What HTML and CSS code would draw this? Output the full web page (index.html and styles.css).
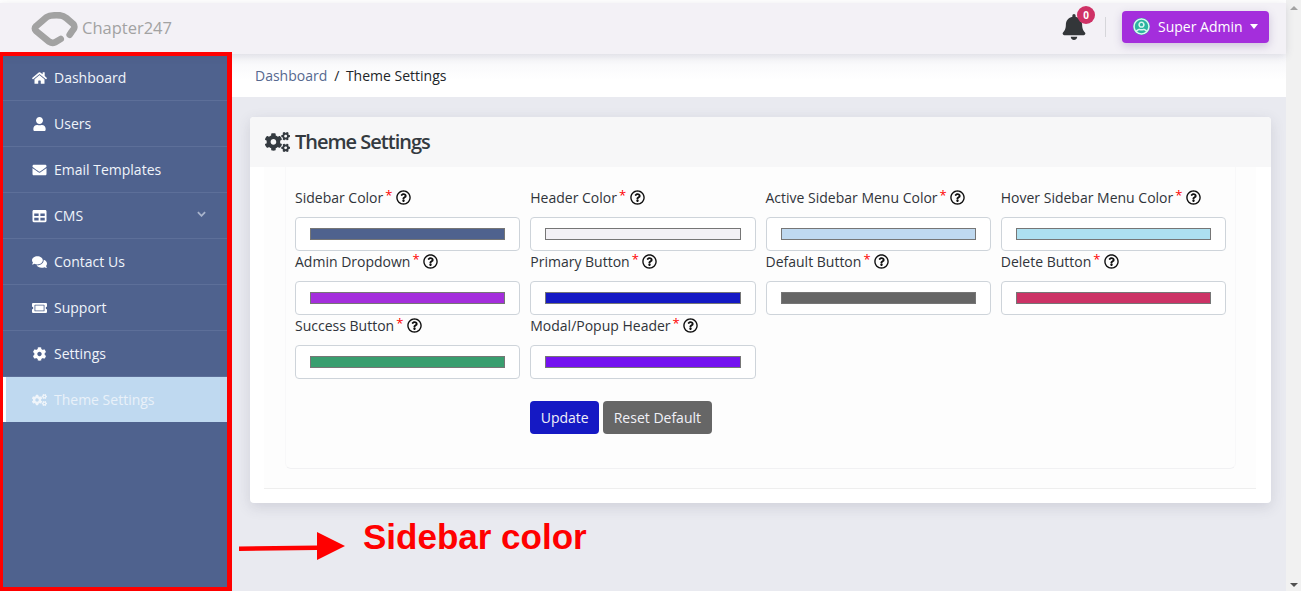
FILE: index.html
```html
<!DOCTYPE html>
<html lang="en">
<head>
<meta charset="utf-8">
<title>Theme Settings</title>
<link rel="stylesheet" href="styles.css">
</head>
<body>
<svg class="defs" aria-hidden="true">
  <symbol id="i-home" viewBox="0 0 576 512"><path d="M280.37 148.26L96 300.11V464a16 16 0 0 0 16 16l112.06-.29a16 16 0 0 0 15.92-16V368a16 16 0 0 1 16-16h64a16 16 0 0 1 16 16v95.64a16 16 0 0 0 16 16.05L464 480a16 16 0 0 0 16-16V300L295.67 148.26a12.19 12.19 0 0 0-15.3 0zM571.6 251.47L488 182.56V44.05a12 12 0 0 0-12-12h-56a12 12 0 0 0-12 12v72.61L318.47 43a48 48 0 0 0-61 0L4.34 251.47a12 12 0 0 0-1.6 16.9l25.5 31A12 12 0 0 0 45.15 301l235.22-193.74a12.19 12.19 0 0 1 15.3 0L530.9 301a12 12 0 0 0 16.9-1.6l25.5-31a12 12 0 0 0-1.7-16.93z"/></symbol>
  <symbol id="i-user" viewBox="0 0 448 512"><path d="M224 256c70.7 0 128-57.3 128-128S294.7 0 224 0 96 57.3 96 128s57.3 128 128 128zm89.6 32h-16.7c-22.2 10.2-46.9 16-72.9 16s-50.6-5.8-72.9-16h-16.7C60.2 288 0 348.2 0 422.4V464c0 26.5 21.5 48 48 48h352c26.5 0 48-21.5 48-48v-41.6c0-74.2-60.2-134.4-134.4-134.4z"/></symbol>
  <symbol id="i-envelope" viewBox="0 0 512 512"><path d="M502.3 190.8c3.9-3.1 9.7-.2 9.7 4.7V400c0 26.5-21.5 48-48 48H48c-26.5 0-48-21.5-48-48V195.6c0-5 5.7-7.8 9.7-4.7 22.4 17.4 52.1 39.5 154.1 113.6 21.1 15.4 56.7 47.8 92.2 47.6 35.7.3 72-32.8 92.3-47.6 102-74.1 131.6-96.3 154-113.7zM256 320c23.2.4 56.6-29.2 73.4-41.4 132.7-96.3 142.8-104.7 173.4-128.7 5.8-4.5 9.2-11.5 9.2-18.9v-19c0-26.5-21.5-48-48-48H48C21.5 64 0 85.5 0 112v19c0 7.4 3.4 14.3 9.2 18.9 30.6 23.9 40.7 32.4 173.4 128.7 16.8 12.2 50.2 41.8 73.4 41.4z"/></symbol>
  <symbol id="i-table" viewBox="0 0 512 512"><path d="M464 32H48C21.49 32 0 53.49 0 80v352c0 26.51 21.49 48 48 48h416c26.51 0 48-21.49 48-48V80c0-26.51-21.49-48-48-48zM224 416H64v-96h160v96zm0-160H64v-96h160v96zm224 160H288v-96h160v96zm0-160H288v-96h160v96z"/></symbol>
  <symbol id="i-comments" viewBox="0 0 576 512"><path d="M416 192c0-88.4-93.1-160-208-160S0 103.6 0 192c0 34.3 14.1 65.9 38 92-13.4 30.2-35.5 54.2-35.8 54.5-2.2 2.3-2.8 5.7-1.5 8.7S4.8 352 8 352c36.6 0 66.9-12.3 88.7-25 32.2 15.7 70.3 25 111.3 25 114.9 0 208-71.6 208-160zm122 220c23.9-26 38-57.7 38-92 0-66.9-53.5-124.2-129.3-148.1.9 6.6 1.3 13.3 1.3 20.1 0 105.9-107.7 192-240 192-10.8 0-21.3-.8-31.7-1.9C207.8 439.6 281.8 480 368 480c41 0 79.1-9.2 111.3-25 21.8 12.7 52.1 25 88.7 25 3.2 0 6.1-1.9 7.3-4.8 1.3-2.9.7-6.3-1.5-8.7-.3-.3-22.4-24.2-35.8-54.5z"/></symbol>
  <symbol id="i-ticket" viewBox="0 0 576 512"><path d="M128 160h320v192H128V160zm400 96c0 26.51 21.49 48 48 48v96c0 26.51-21.49 48-48 48H48c-26.51 0-48-21.49-48-48v-96c26.51 0 48-21.49 48-48s-21.49-48-48-48v-96c0-26.51 21.49-48 48-48h480c26.51 0 48 21.49 48 48v96c-26.51 0-48 21.49-48 48zm-48-104c0-13.255-10.745-24-24-24H120c-13.255 0-24 10.745-24 24v208c0 13.255 10.745 24 24 24h336c13.255 0 24-10.745 24-24V152z"/></symbol>
  <symbol id="i-cog" viewBox="0 0 512 512"><path d="M487.4 315.7l-42.6-24.6c4.3-23.2 4.3-47 0-70.2l42.6-24.6c4.9-2.8 7.1-8.6 5.5-14-11.1-35.6-30-67.8-54.7-94.6-3.8-4.1-10-5.1-14.8-2.3L380.8 110c-17.9-15.4-38.5-27.3-60.8-35.1V25.8c0-5.6-3.9-10.5-9.4-11.7-36.7-8.2-74.3-7.8-109.2 0-5.5 1.2-9.4 6.1-9.4 11.7V75c-22.2 7.9-42.8 19.8-60.8 35.1L88.7 85.5c-4.9-2.8-11-1.9-14.8 2.3-24.7 26.7-43.6 58.9-54.7 94.6-1.7 5.4.6 11.2 5.5 14L67.3 221c-4.3 23.2-4.3 47 0 70.2l-42.6 24.6c-4.9 2.8-7.1 8.6-5.5 14 11.1 35.6 30 67.8 54.7 94.6 3.8 4.1 10 5.1 14.8 2.3l42.6-24.6c17.9 15.4 38.5 27.3 60.8 35.1v49.2c0 5.6 3.9 10.5 9.4 11.7 36.7 8.2 74.3 7.8 109.2 0 5.5-1.2 9.4-6.1 9.4-11.7v-49.2c22.2-7.9 42.8-19.8 60.8-35.1l42.6 24.6c4.9 2.8 11 1.9 14.8-2.3 24.7-26.7 43.6-58.9 54.7-94.6 1.5-5.5-.7-11.3-5.6-14.1zM256 336c-44.1 0-80-35.9-80-80s35.9-80 80-80 80 35.9 80 80-35.9 80-80 80z"/></symbol>
  <symbol id="i-cogs" viewBox="0 0 640 512"><path d="M512.1 191l-8.2 14.3c-3 5.3-9.4 7.5-15.1 5.4-11.8-4.4-22.6-10.7-32.1-18.6-4.6-3.8-5.8-10.5-2.8-15.7l8.2-14.3c-6.9-8-12.3-17.3-15.9-27.4h-16.5c-6 0-11.2-4.3-12.2-10.3-2-12-2.1-24.6 0-37.1 1-6 6.2-10.4 12.2-10.4h16.5c3.6-10.1 9-19.4 15.9-27.4l-8.2-14.3c-3-5.2-1.9-11.9 2.8-15.7 9.5-7.9 20.4-14.2 32.1-18.6 5.7-2.1 12.1.1 15.1 5.4l8.2 14.3c10.5-1.9 21.2-1.9 31.7 0L552 6.3c3-5.3 9.4-7.5 15.1-5.4 11.8 4.4 22.6 10.7 32.1 18.6 4.6 3.8 5.8 10.5 2.8 15.7l-8.2 14.3c6.9 8 12.3 17.3 15.9 27.4h16.5c6 0 11.2 4.3 12.2 10.3 2 12 2.1 24.6 0 37.1-1 6-6.2 10.4-12.2 10.4h-16.5c-3.6 10.1-9 19.4-15.9 27.4l8.2 14.3c3 5.2 1.9 11.9-2.8 15.7-9.5 7.9-20.4 14.2-32.1 18.6-5.7 2.1-12.1-.1-15.1-5.4l-8.2-14.3c-10.4 1.9-21.2 1.9-31.7 0zm-10.5-58.8c38.5 29.6 82.4-14.3 52.8-52.8-38.5-29.7-82.4 14.3-52.8 52.8zM386.3 286.1l33.7 16.8c10.1 5.8 14.5 18.1 10.5 29.1-8.9 24.2-26.4 46.4-42.6 65.8-7.4 8.9-20.2 11.1-30.3 5.3l-29.1-16.8c-16 13.7-34.6 24.6-54.9 31.7v33.6c0 11.6-8.3 21.6-19.7 23.6-24.6 4.2-50.4 4.4-75.9 0-11.5-2-20-11.9-20-23.6V418c-20.3-7.2-38.9-18-54.9-31.7L74 403c-10 5.8-22.9 3.6-30.3-5.3-16.2-19.4-33.3-41.6-42.2-65.7-4-10.9.4-23.2 10.5-29.1l33.3-16.8c-3.9-20.9-3.9-42.4 0-63.4L12 205.8c-10.1-5.8-14.6-18.1-10.5-29 8.9-24.2 26-46.4 42.2-65.8 7.4-8.9 20.2-11.1 30.3-5.3l29.1 16.8c16-13.7 34.6-24.6 54.9-31.7V57.1c0-11.5 8.2-21.5 19.6-23.5 24.6-4.2 50.5-4.4 76-.1 11.5 2 20 11.9 20 23.6v33.6c20.3 7.2 38.9 18 54.9 31.7l29.1-16.8c10-5.8 22.9-3.6 30.3 5.3 16.2 19.4 33.2 41.6 42.1 65.8 4 10.9.1 23.2-10 29.1l-33.7 16.8c3.9 21 3.9 42.5 0 63.5zm-117.6 21.1c59.2-77-28.7-164.9-105.7-105.7-59.2 77 28.7 164.9 105.7 105.7zm243.4 182.7l-8.2 14.3c-3 5.3-9.4 7.5-15.1 5.4-11.8-4.4-22.6-10.7-32.1-18.6-4.6-3.8-5.8-10.5-2.8-15.7l8.2-14.3c-6.9-8-12.3-17.3-15.9-27.4h-16.5c-6 0-11.2-4.3-12.2-10.3-2-12-2.1-24.6 0-37.1 1-6 6.2-10.4 12.2-10.4h16.5c3.6-10.1 9-19.4 15.9-27.4l-8.2-14.3c-3-5.2-1.9-11.9 2.8-15.7 9.5-7.9 20.4-14.2 32.1-18.6 5.7-2.1 12.1.1 15.1 5.4l8.2 14.3c10.5-1.9 21.2-1.9 31.7 0l8.2-14.3c3-5.3 9.4-7.5 15.1-5.4 11.8 4.4 22.6 10.7 32.1 18.6 4.6 3.8 5.8 10.5 2.8 15.7l-8.2 14.3c6.9 8 12.3 17.3 15.9 27.4h16.5c6 0 11.2 4.3 12.2 10.3 2 12 2.1 24.6 0 37.1-1 6-6.2 10.4-12.2 10.4h-16.5c-3.6 10.1-9 19.4-15.9 27.4l8.2 14.3c3 5.2 1.9 11.9-2.8 15.7-9.5 7.9-20.4 14.2-32.1 18.6-5.7 2.1-12.1-.1-15.1-5.4l-8.2-14.3c-10.4 1.9-21.2 1.9-31.7 0zM501.6 431c38.5 29.6 82.4-14.3 52.8-52.8-38.5-29.6-82.4 14.3-52.8 52.8z"/></symbol>
  <symbol id="i-bell" viewBox="0 0 448 512"><path d="M224 512c35.32 0 63.97-28.65 63.97-64H160.03c0 35.35 28.65 64 63.97 64zm215.39-149.71c-19.32-20.76-55.47-51.99-55.47-154.29 0-77.7-54.48-139.9-127.94-155.16V32c0-17.67-14.32-32-31.98-32s-31.98 14.33-31.98 32v20.84C118.56 68.1 64.08 130.3 64.08 208c0 102.3-36.15 133.53-55.47 154.29-6 6.45-8.66 14.16-8.61 21.71.11 16.4 12.98 32 32.1 32h383.8c19.12 0 32-15.6 32.1-32 .05-7.55-2.61-15.27-8.61-21.71z"/></symbol>
  <symbol id="i-help" viewBox="0 0 512 512"><path d="M256 8C119.043 8 8 119.083 8 256c0 136.997 111.043 248 248 248s248-111.003 248-248C504 119.083 392.957 8 256 8zm0 448c-110.532 0-200-89.431-200-200 0-110.495 89.472-200 200-200 110.491 0 200 89.471 200 200 0 110.53-89.431 200-200 200zm107.244-255.2c0 67.052-72.421 68.084-72.421 92.863V300c0 6.627-5.373 12-12 12h-45.647c-6.627 0-12-5.373-12-12v-8.659c0-35.745 27.1-50.034 47.579-61.516 17.561-9.845 28.324-16.541 28.324-29.579 0-17.246-21.999-28.693-39.784-28.693-23.189 0-33.894 10.977-48.942 29.969-4.057 5.12-11.46 6.071-16.666 2.124l-27.824-21.098c-5.107-3.872-6.251-11.066-2.644-16.363C184.846 131.491 214.94 112 261.794 112c49.071 0 101.45 38.304 101.45 88.8zM298 368c0 23.159-18.841 42-42 42s-42-18.841-42-42 18.841-42 42-42 42 18.841 42 42z"/></symbol>
  <symbol id="i-usercircle" viewBox="0 0 496 512"><path d="M248 104c-53 0-96 43-96 96s43 96 96 96 96-43 96-96-43-96-96-96zm0 144c-26.5 0-48-21.5-48-48s21.5-48 48-48 48 21.5 48 48-21.5 48-48 48zm0-240C111 8 0 119 0 256s111 248 248 248 248-111 248-248S385 8 248 8zm0 448c-49.7 0-95.1-18.3-130.1-48.4 14.9-23 40.4-38.6 69.6-39.5 20.8 6.4 40.6 9.6 60.5 9.6s39.7-3.1 60.5-9.6c29.2 1 54.7 16.5 69.6 39.5-35 30.1-80.4 48.4-130.1 48.4zm162.7-84.1c-24.4-31.4-62.1-51.9-105.1-51.9-10.2 0-26 9.6-57.6 9.6-31.5 0-47.4-9.6-57.6-9.6-42.9 0-80.6 20.5-105.1 51.9C61.9 339.2 48 299.2 48 256c0-110.3 89.7-200 200-200s200 89.7 200 200c0 43.2-13.9 83.2-37.3 115.9z"/></symbol>
</svg>

<div class="window">
  <div class="page">
    <header class="topbar">
      <a class="brand" href="#">
        <svg class="brand-mark" viewBox="0 0 50 38"><path d="M31 28.500 L25 32 Q22 33.500 19 31.500 L5 20 Q2.500 17.500 5 15 L16 5.500 Q20 3 30 3.500 Q34 4 37 6.500 L44.500 13 Q46 15 45 17.500 L42.500 21 L40.500 24"/></svg>
        <span class="brand-name">Chapter247</span>
      </a>
      <div class="top-actions">
        <div class="bell">
          <svg class="bell-icon"><use href="#i-bell"/></svg>
          <span class="badge">0</span>
        </div>
        <span class="top-divider"></span>
        <button class="admin" type="button">
          <svg class="admin-icon"><use href="#i-usercircle"/></svg>
          <span class="admin-name">Super Admin</span>
          <span class="caret"></span>
        </button>
      </div>
    </header>

    <div class="shell">
      <nav class="sidebar">
        <a class="nav-item" href="#"><svg class="nav-icon"><use href="#i-home"/></svg>Dashboard</a>
        <a class="nav-item" href="#"><svg class="nav-icon"><use href="#i-user"/></svg>Users</a>
        <a class="nav-item" href="#"><svg class="nav-icon"><use href="#i-envelope"/></svg>Email Templates</a>
        <a class="nav-item" href="#"><svg class="nav-icon"><use href="#i-table"/></svg>CMS<svg class="chevron" viewBox="0 0 10 6"><path d="M1 1l4 4 4-4"/></svg></a>
        <a class="nav-item" href="#"><svg class="nav-icon"><use href="#i-comments"/></svg>Contact Us</a>
        <a class="nav-item" href="#"><svg class="nav-icon"><use href="#i-ticket"/></svg>Support</a>
        <a class="nav-item" href="#"><svg class="nav-icon"><use href="#i-cog"/></svg>Settings</a>
        <a class="nav-item active" href="#"><svg class="nav-icon"><use href="#i-cogs"/></svg>Theme Settings</a>
      </nav>

      <main class="main">
        <div class="crumbs">
          <a href="#">Dashboard</a><span class="crumb-sep">/</span><span class="crumb-now">Theme Settings</span>
        </div>
        <section class="card">
          <h1 class="card-head"><svg class="head-icon"><use href="#i-cogs"/></svg>Theme Settings</h1>
          <div class="card-body">
            <div class="section">
              <form class="panel">
                <div class="field"><label class="field-label">Sidebar Color<sup class="req">*</sup><svg class="help"><use href="#i-help"/></svg></label><input class="swatch" type="color" value="#4f628e"></div>
                <div class="field"><label class="field-label">Header Color<sup class="req">*</sup><svg class="help"><use href="#i-help"/></svg></label><input class="swatch" type="color" value="#f3f1f6"></div>
                <div class="field"><label class="field-label">Active Sidebar Menu Color<sup class="req">*</sup><svg class="help"><use href="#i-help"/></svg></label><input class="swatch" type="color" value="#bfd9f0"></div>
                <div class="field"><label class="field-label">Hover Sidebar Menu Color<sup class="req">*</sup><svg class="help"><use href="#i-help"/></svg></label><input class="swatch" type="color" value="#ade0f0"></div>
                <div class="field"><label class="field-label">Admin Dropdown<sup class="req">*</sup><svg class="help"><use href="#i-help"/></svg></label><input class="swatch" type="color" value="#a42edc"></div>
                <div class="field"><label class="field-label">Primary Button<sup class="req">*</sup><svg class="help"><use href="#i-help"/></svg></label><input class="swatch" type="color" value="#1519c4"></div>
                <div class="field"><label class="field-label">Default Button<sup class="req">*</sup><svg class="help"><use href="#i-help"/></svg></label><input class="swatch" type="color" value="#666666"></div>
                <div class="field"><label class="field-label">Delete Button<sup class="req">*</sup><svg class="help"><use href="#i-help"/></svg></label><input class="swatch" type="color" value="#cc3366"></div>
                <div class="field"><label class="field-label">Success Button<sup class="req">*</sup><svg class="help"><use href="#i-help"/></svg></label><input class="swatch" type="color" value="#399e6f"></div>
                <div class="field"><label class="field-label">Modal/Popup Header<sup class="req">*</sup><svg class="help"><use href="#i-help"/></svg></label><input class="swatch" type="color" value="#7412f0"></div>
                <div class="actions">
                  <button class="btn btn-primary" type="button">Update</button>
                  <button class="btn btn-default" type="button">Reset Default</button>
                </div>
              </form>
            </div>
          </div>
        </section>
      </main>
    </div>
  </div>

  <div class="scrollbar">
    <span class="arrow-up"></span>
    <span class="arrow-down"></span>
  </div>

  <div class="note-frame"></div>
  <svg class="note-arrow" viewBox="0 0 110 34"><path d="M0 16.500 L78 15.500 L78 2 L106 16 L78 30 L78 20 L0 21 Z"/></svg>
  <div class="note-text">Sidebar color</div>
</div>
</body>
</html>
```

FILE: styles.css
```css
* { box-sizing: border-box; }
html, body { margin: 0; height: 591px; overflow: hidden; }
body { font-family: "Open Sans", "Noto Sans", sans-serif; font-size: 14px; color: #212529; background: #fff; }
a { text-decoration: none; color: inherit; }
.defs { display: none; }

.window { position: relative; display: flex; width: 1301px; height: 591px; }
.page { flex: 1; min-width: 0; display: flex; flex-direction: column; padding-top: 3px; background: #fff; }

.scrollbar { width: 15px; background: #f1f1f1; display: flex; flex-direction: column; justify-content: space-between; align-items: center; padding: 6px 0 4px; }
.arrow-up { width: 0; height: 0; border-left: 4px solid transparent; border-right: 4px solid transparent; border-bottom: 4px solid #a3a3a3; }
.arrow-down { width: 0; height: 0; border-left: 4px solid transparent; border-right: 4px solid transparent; border-top: 4px solid #505050; }

.topbar { position: relative; z-index: 2; height: 51px; flex: none; display: flex; align-items: center; justify-content: space-between; background: #f3f1f6; box-shadow: 0 2px 8px rgba(60, 60, 90, .14); padding: 0 17px 0 31px; }
.brand { display: flex; align-items: center; gap: 3px; }
.brand-mark { width: 48px; height: 36px; margin-top: 2px; fill: none; stroke: #a2a2a2; stroke-width: 7; stroke-linecap: round; stroke-linejoin: round; }
.brand-name { font-size: 16.500px; color: #a2a2a2; margin-top: -3px; }

.top-actions { display: flex; align-items: center; margin-bottom: 4px; }
.bell { position: relative; width: 24px; height: 26px; margin-top: 1px; }
.bell-icon { display: block; width: 24px; height: 26px; fill: #333639; }
.badge { position: absolute; top: -8px; left: 15px; width: 18px; height: 18px; border-radius: 50%; background: #cf3166; color: #fff; font-size: 10px; font-weight: 700; line-height: 18px; text-align: center; }
.top-divider { width: 1px; height: 20px; background: #d6d6da; margin: 0 16px 0 19px; }
.admin { display: flex; align-items: center; height: 32px; width: 147px; padding: 0 11px; border: 0; border-radius: 4px; background: #a42edc; color: #fff; font: inherit; font-size: 14px; box-shadow: 0 3px 8px rgba(90, 60, 140, .25); }
.admin-icon { width: 17px; height: 17px; fill: #d8f5ef; background: #2bb5a0; border-radius: 50%; margin-right: 8px; flex: none; }
.admin-name { white-space: nowrap; }
.caret { width: 0; height: 0; border-left: 4.500px solid transparent; border-right: 4.500px solid transparent; border-top: 5px solid #fff; margin-left: 7px; }

.shell { flex: 1; min-height: 0; display: flex; }
.sidebar { width: 232px; flex: none; background: #4f628e; padding: 1px 5px 0 3px; }
.nav-item { display: flex; align-items: center; height: 46px; padding: 0 21px 0 29px; font-size: 14px; color: #f0f4fa; border-bottom: 1px solid #5d6f99; }
.nav-item:last-child { border-bottom: 0; }
.nav-icon { width: 15px; height: 14px; fill: #fff; margin-right: 7px; flex: none; }
.chevron { width: 9px; height: 6px; margin: -3px 0 0 auto; fill: none; stroke: #a9b4cc; stroke-width: 2; }
.nav-item.active { height: 45px; background: #bfd9f0; border-left: 3px solid #fff; padding-left: 26px; color: #e9f1f9; }
.nav-item.active .nav-icon { fill: #f0f5fa; }

.main { flex: 1; min-width: 0; display: flex; flex-direction: column; background: #e9eaf0; }
.crumbs { height: 43px; flex: none; display: flex; align-items: center; padding-left: 23px; background: linear-gradient(#f6f6f9, #fff 60%); color: #212529; }
.crumbs a { color: #56688f; }
.crumb-sep { margin: 0 6.500px 0 7px; }

.card { margin: 20px 15px 0 18px; height: 386px; background: #fff; border-radius: 4px; box-shadow: 0 4px 14px rgba(60, 60, 90, .15); overflow: hidden; }
.card-head { display: flex; align-items: center; height: 50px; margin: 0; padding: 0 0 1px 15px; background: #f7f7f8; font-size: 20px; font-weight: 600; letter-spacing: -1px; color: #343a40; }
.head-icon { width: 25px; height: 20px; fill: #343a40; margin-right: 5px; flex: none; }
.card-body { padding: 0 15px 0 14px; }
.section { height: 322px; background: #fdfdfd; border-bottom: 1px solid #eee; padding: 0 20px 0 21px; }
.panel { height: 302px; display: grid; grid-template-columns: repeat(4, 1fr); column-gap: 10px; align-content: start; padding: 20px 9px 0; background: #fdfdfd; border: solid #f8f8f9; border-bottom-color: #f1f1f3; border-width: 0 1px 1px; border-radius: 0 0 6px 6px; }
.field-label { display: flex; align-items: center; height: 21px; margin-bottom: 9px; color: #30343a; white-space: nowrap; }
.req { color: #f00; font-size: 13px; line-height: 1; margin-left: 2px; position: relative; top: -2px; vertical-align: baseline; }
.help { width: 15px; height: 15px; margin-left: 3.500px; fill: #111; }
.swatch { display: block; width: 100%; height: 34px; padding: 10px 14px; background: #fff; border: 1px solid #ced4da; border-radius: 4px; -webkit-appearance: none; appearance: none; }
.swatch::-webkit-color-swatch-wrapper { padding: 0; }
.swatch::-webkit-color-swatch { border: 1px solid #767676; border-radius: 0; }
.actions { grid-column: 2 / -1; display: flex; gap: 4px; margin-top: 22px; }
.btn { height: 33px; border: 0; border-radius: 4px; color: #f1f1f8; font: inherit; font-size: 14px; padding: 0 10.500px; }
.btn-primary { background: #1519c4; }
.btn-default { background: #666; }

.note-frame { position: absolute; left: 0; top: 52px; width: 232px; height: 539px; border: solid #f00; border-width: 4px 5px 4px 3px; z-index: 3; }
.note-arrow { position: absolute; left: 239px; top: 530px; width: 110px; height: 34px; fill: #f00; z-index: 3; }
.note-text { position: absolute; left: 363px; top: 516px; font-family: "Liberation Sans", Arial, sans-serif; font-weight: 700; font-size: 35px; line-height: 42px; color: #f00; white-space: nowrap; z-index: 3; }
```
